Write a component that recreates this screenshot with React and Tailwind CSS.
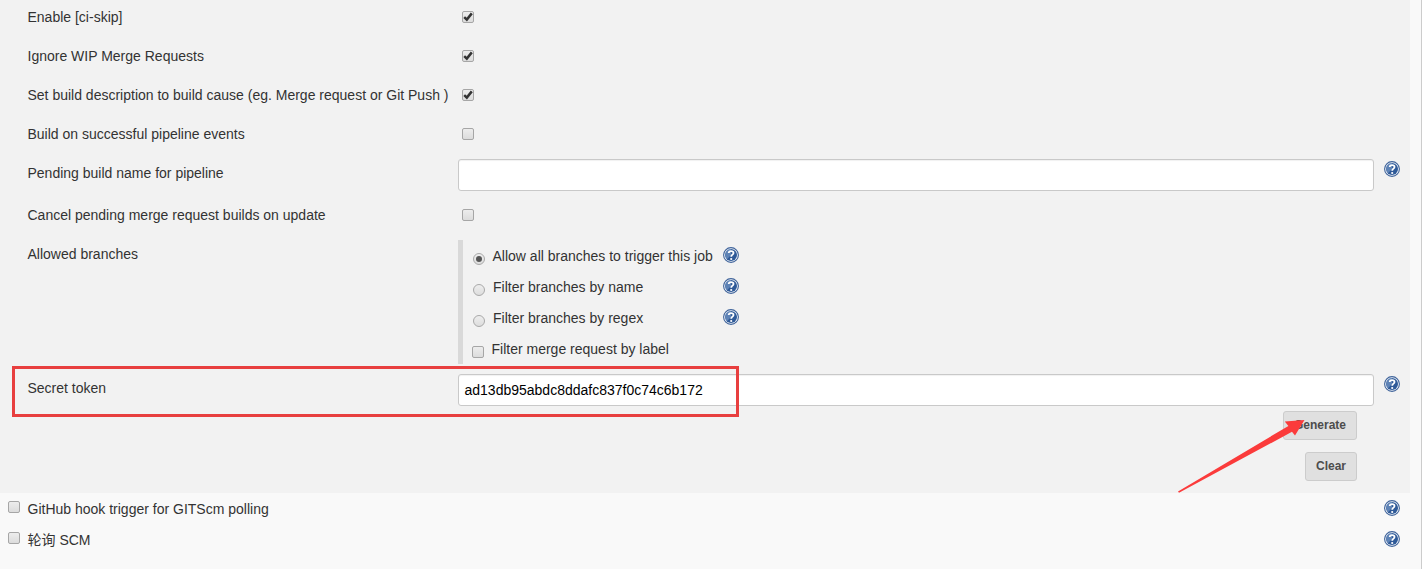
import React from "react";

function Checkbox({ checked, className = "" }) {
  return (
    <span
      role="checkbox"
      aria-checked={!!checked}
      className={`block h-3 w-3 shrink-0 rounded-[2px] border border-[#a6a6a6] bg-linear-to-b from-[#ededed] to-[#dcdcdc] ${className}`}
    >
      {checked && (
        <svg viewBox="0 0 10 10" className="block h-2.5 w-2.5" fill="none" stroke="#333" strokeWidth="2.5">
          <path d="M1.2 5.2 L3.8 7.6 L8.8 1.4" />
        </svg>
      )}
    </span>
  );
}

function Radio({ checked }) {
  return (
    <span
      role="radio"
      aria-checked={!!checked}
      className="mt-[13px] flex h-3 w-3 shrink-0 items-center justify-center rounded-full border border-[#a9a9a9] bg-linear-to-b from-[#eeeeee] to-[#dddddd]"
    >
      {checked && <span className="h-1.5 w-1.5 rounded-full bg-[#555]" />}
    </span>
  );
}

function Help({ className = "" }) {
  return (
    <svg viewBox="0 0 16 16" className={`block h-4 w-4 shrink-0 ${className}`}>
      <circle cx="8" cy="8" r="7.4" fill="#f4f7fb" stroke="#3f639a" strokeWidth="1.1" />
      <circle cx="8" cy="8" r="6" fill="#2f5a98" />
      <path d="M2.4 6.5 A5.9 5.9 0 0 1 8 2 L8 8 L4 12.3 A6 6 0 0 1 2.4 6.5Z" fill="#7f9fca" opacity="0.6" />
      <path
        d="M5.7 6.1 C5.7 3.3 10.5 3.4 10.5 6 C10.5 7.7 8.2 7.7 8.2 9.8"
        fill="none"
        stroke="#fff"
        strokeWidth="1.8"
      />
      <circle cx="8.2" cy="12" r="1.1" fill="#fff" />
    </svg>
  );
}

function Row({ label, className = "h-[39px]", children }) {
  return (
    <div className={`flex shrink-0 items-start pl-[27.5px] ${className}`}>
      <div className="w-[430.5px] shrink-0 pt-2.5 whitespace-nowrap">{label}</div>
      {children}
    </div>
  );
}

function TextField({ value }) {
  return (
    <div className="mt-1.5 h-8 w-[916px] shrink-0 rounded-[3px] border border-[#c9c9c9] bg-white px-[5.5px] leading-[30px] text-black shadow-[inset_0_1px_1px_rgba(0,0,0,0.06)]">
      {value}
    </div>
  );
}

function Button({ children, className }) {
  return (
    <button
      className={`h-[29px] rounded-[3px] border border-[#cccccc] bg-[#e0e0e0] pb-0.5 text-center text-xs font-bold text-[#4d4d4d] ${className}`}
    >
      {children}
    </button>
  );
}

function BranchOption({ label, checked }) {
  return (
    <div className="flex h-[31px] items-start pl-2.5">
      <Radio checked={checked} />
      <span className={`w-[231px] pt-1.5 whitespace-nowrap ${checked ? "pl-[7.5px]" : "pl-2"}`}>{label}</span>
      <Help className="mt-[7px] ml-[7px]" />
    </div>
  );
}

function Trigger({ label }) {
  return (
    <div className="flex h-[31px] items-start pl-2">
      <Checkbox className="mt-2" />
      <span className="w-[1364px] pt-1.5 pl-[7.5px]">{label}</span>
      <Help className="mt-[7px]" />
    </div>
  );
}

export default function App() {
  return (
    <div className="relative flex h-[569px] w-[1424px] overflow-hidden bg-white font-['Liberation_Sans','Noto_Sans_CJK_SC',sans-serif] text-sm leading-5 text-[#333]">
      <main className="w-[1422px] shrink-0 border-r border-[#cccccc] bg-[#f9f9f9]">
        <section className="flex h-[493px] w-[1410px] flex-col bg-[#f2f2f2]">
          <Row label="Enable [ci-skip]" className="-mt-[3px] h-[39px]">
            <Checkbox checked className="mt-3.5 ml-1" />
          </Row>
          <Row label="Ignore WIP Merge Requests">
            <Checkbox checked className="mt-3.5 ml-1" />
          </Row>
          <Row label="Set build description to build cause (eg. Merge request or Git Push )">
            <Checkbox checked className="mt-3.5 ml-1" />
          </Row>
          <Row label="Build on successful pipeline events">
            <Checkbox className="mt-3.5 ml-1" />
          </Row>
          <Row label="Pending build name for pipeline" className="h-[42px]">
            <TextField />
            <Help className="mt-2 ml-2.5" />
          </Row>
          <Row label="Cancel pending merge request builds on update">
            <Checkbox className="mt-3.5 ml-1" />
          </Row>
          <Row label="Allowed branches" className="h-[134px]">
            <div className="mt-1.5 h-[124px] border-l-[5px] border-[#d9d9d9]">
              <BranchOption label="Allow all branches to trigger this job" checked />
              <BranchOption label="Filter branches by name" />
              <BranchOption label="Filter branches by regex" />
              <div className="flex h-[31px] items-start pl-[9px]">
                <Checkbox className="mt-[13px]" />
                <span className="pt-1.5 pl-[7.5px]">Filter merge request by label</span>
              </div>
            </div>
          </Row>
          <Row label="Secret token" className="h-[43px]">
            <TextField value="ad13db95abdc8ddafc837f0c74c6b172" />
            <Help className="mt-2 ml-2.5" />
          </Row>
          <div className="flex w-[1357px] flex-col items-end gap-3">
            <Button className="w-[74px]">Generate</Button>
            <Button className="w-[52px]">Clear</Button>
          </div>
        </section>
        <section>
          <Trigger label="GitHub hook trigger for GITScm polling" />
          <Trigger label="轮询 SCM" />
        </section>
      </main>

      <div className="absolute top-[366px] left-3 h-[51px] w-[727px] border-3 border-[#e83f3f]" />
      <svg viewBox="0 0 130 76" className="absolute top-[418px] left-[1176px] h-[76px] w-[130px]">
        <path d="M2 73.6 L112.4 7.9 L108.8 3.4 L128.5 2 L119 17.4 L116 13.8 L3 74.8 Z" fill="#fb3b3b" />
      </svg>
    </div>
  );
}
